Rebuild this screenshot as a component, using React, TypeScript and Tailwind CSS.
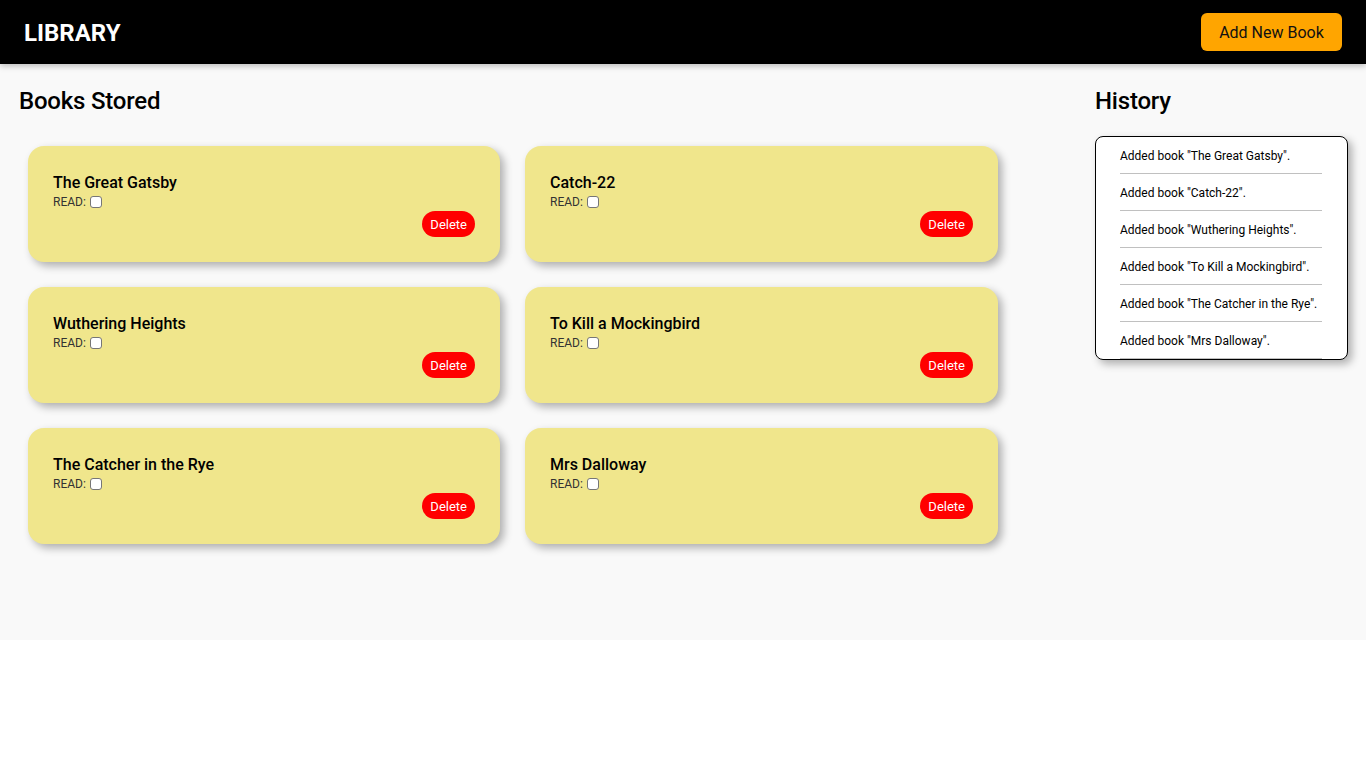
import React from "react";

const books = [
  "The Great Gatsby",
  "Catch-22",
  "Wuthering Heights",
  "To Kill a Mockingbird",
  "The Catcher in the Rye",
  "Mrs Dalloway",
];

export default function App() {
  return (
    <div className="font-['Roboto',sans-serif] bg-white min-h-screen">
      <header className="h-16 bg-black flex items-center justify-between pl-6 pr-6 shadow-[0_2px_6px_rgba(0,0,0,0.25)] relative z-10">
        <h1 className="text-white text-[24px] font-bold leading-none pt-[2px]">LIBRARY</h1>
        <button className="bg-[#ffa500] text-[#111] text-[16px] h-[38px] w-[141px] rounded-[6px] leading-none pt-[2px]">
          Add New Book
        </button>
      </header>
      <main className="h-[576px] bg-[#f9f9f9] flex">
        <section className="flex-1 pl-[19px]">
          <h2 className="text-[24px] font-medium text-black mt-[23px] leading-[28px] tracking-[-0.2px]">Books Stored</h2>
          <div className="grid grid-cols-[472px_473px] gap-x-[25px] gap-y-[25px] mt-[31px] pl-[9px]">
            {books.map((b) => (
              <div
                key={b}
                className="bg-[#f0e68c] rounded-[16px] h-[116px] px-[25px] pt-[25px] shadow-[4px_4px_8px_rgba(0,0,0,0.3)] flex flex-col"
              >
                <div className="text-[16px] font-medium text-black leading-[20px] pt-[2px]">{b}</div>
                <div className="flex items-center h-[18px] text-[12px] text-[#333] gap-[4px]">
                  <span>READ:</span>
                  <span className="inline-block w-[12px] h-[12px] border border-[#767676] rounded-[3px] bg-white"></span>
                </div>
                <div className="flex justify-end">
                  <button className="bg-[#ff0000] text-white text-[13px] h-[26px] px-[8px] rounded-full leading-none">
                    Delete
                  </button>
                </div>
              </div>
            ))}
          </div>
        </section>
        <aside className="w-[271px] pr-[18px] shrink-0">
          <h2 className="text-[24px] font-medium text-black mt-[23px] leading-[28px] tracking-[-0.2px]">History</h2>
          <ul className="mt-[21px] border border-black rounded-[8px] bg-white pl-[24px] pr-[25px] shadow-[4px_4px_8px_rgba(0,0,0,0.3)]">
            {books.map((b) => (
              <li
                key={b}
                className="h-[37px] border-b border-[#c0c0c0] text-[12px] text-black flex items-center pt-[2px]"
              >
                Added book "{b}".
              </li>
            ))}
          </ul>
        </aside>
      </main>
    </div>
  );
}
